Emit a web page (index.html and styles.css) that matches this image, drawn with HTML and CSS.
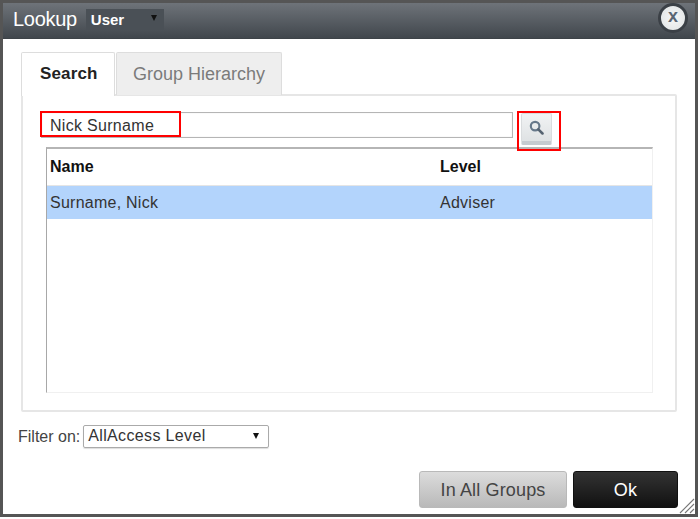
FILE: index.html
```html
<!DOCTYPE html>
<html lang="en">
<head>
<meta charset="utf-8">
<title>Lookup</title>
<link rel="stylesheet" href="styles.css">
</head>
<body>
<div class="dialog">
  <header class="titlebar">
    <span class="title">Lookup</span>
    <span class="type-select">User<span class="arrow small"></span></span>
    <span class="close">x</span>
  </header>
  <main class="content">
    <nav class="tabs">
      <span class="tab active">Search</span>
      <span class="tab">Group Hierarchy</span>
    </nav>
    <section class="panel">
      <div class="search-row">
        <div class="search-input">Nick Surname</div>
        <button class="search-btn" aria-label="Search">
          <svg width="15" height="15" viewBox="0 0 14 14"><circle cx="5.7" cy="5.7" r="4" fill="none" stroke="#66788a" stroke-width="2"/><path d="M8.7 8.7L12.6 12.6" stroke="#566371" stroke-width="2.4" stroke-linecap="round"/></svg>
        </button>
      </div>
      <div class="grid">
        <div class="row head"><span class="col-name">Name</span><span>Level</span></div>
        <div class="row selected"><span class="col-name">Surname, Nick</span><span>Adviser</span></div>
      </div>
    </section>
    <div class="filter">
      <label class="filter-label">Filter on:</label>
      <div class="filter-select">AllAccess Level<span class="arrow"></span></div>
    </div>
    <footer class="actions">
      <button class="btn btn-grey">In All Groups</button>
      <button class="btn btn-dark">Ok</button>
    </footer>
  </main>
  <svg class="grip" width="16" height="16" viewBox="0 0 16 16"><path d="M1 15L15 1M6 15L15 6M11 15L15 11" stroke="#777" stroke-width="1.1" fill="none"/></svg>
  <div class="mark mark-input"></div>
  <div class="mark mark-btn"></div>
</div>
</body>
</html>
```
FILE: styles.css
```css
* { box-sizing: border-box; }
html, body { margin: 0; padding: 0; background: #fff; }
body { width: 700px; height: 519px; overflow: hidden; font-family: "Liberation Sans", Arial, sans-serif; }
.dialog { position: relative; width: 698px; height: 517px; border: 3px solid #555; background: #fff; display: flex; flex-direction: column; }
.titlebar { height: 36px; flex: none; display: flex; align-items: center; padding-left: 10px; background: linear-gradient(#6e7379, #41474d); border-bottom: 1px solid #3d4348; color: #fff; }
.title { font-size: 20px; letter-spacing: -0.3px; margin-right: 9px; margin-top: -2px; }
.type-select { width: 78px; height: 21px; background: #4a5056; font-size: 15px; font-weight: bold; padding: 2px 0 0 5px; position: relative; margin-top: -2px; }
.close { position: absolute; right: 7px; top: 0; width: 30px; height: 30px; border-radius: 50%; background: radial-gradient(#f6f7f7, #dfe2e3); border: 3px solid #3b4046; color: #5a6673; font-size: 18px; font-weight: bold; display: flex; align-items: center; justify-content: center; padding-bottom: 3px; }
.arrow { position: absolute; right: 9px; top: 7px; border-left: 3px solid transparent; border-right: 3px solid transparent; border-top: 6px solid #111; }
.arrow.small { right: 7px; top: 6px; }
.content { flex: 1; display: flex; flex-direction: column; padding: 13px 17px 6px 18px; }
.tabs { display: flex; height: 43px; flex: none; position: relative; z-index: 1; margin-bottom: -1px; }
.tab { height: 43px; padding: 11px 0 0 16px; font-size: 18px; color: #7b7b7b; background: #eee; border: 1px solid #ddd; border-bottom: 0; border-radius: 2px 2px 0 0; white-space: nowrap; width: 166px; margin-left: 1px; }
.tab.active { width: 94px; margin-left: 0; padding: 11px 0 0 18px; background: #fff; color: #222; font-weight: bold; font-size: 17px; letter-spacing: 0.15px; height: 44px; }
.panel { width: 656px; height: 318px; flex: none; border: 2px solid #e6e6e6; border-radius: 2px; padding: 16px 0 0 18px; }
.search-row { display: flex; align-items: flex-start; height: 35px; }
.search-input { width: 472px; height: 26px; border: 1px solid #b5b5b5; font-size: 16px; letter-spacing: 0.3px; color: #333; padding: 4px 0 0 8px; box-shadow: inset 0 0 1px #ccc; }
.search-btn { width: 31px; height: 32px; margin: 1px 0 0 8px; padding: 0; border: 1px solid #d9dcde; border-bottom: 4px solid #c5cbd0; border-radius: 2px; background: linear-gradient(#f1f3f4, #dfe2e4); display: flex; align-items: center; justify-content: center; }
.grid { width: 607px; height: 246px; margin-left: 5px; border-top: 2px solid #b5b5b5; border-left: 1px solid #a8a8a8; border-right: 1px solid #f0f0f0; border-bottom: 1px solid #f0f0f0; }
.row { display: flex; align-items: center; font-size: 16px; letter-spacing: 0.25px; color: #333; padding-left: 3px; }
.col-name { width: 390px; }
.head { height: 37px; font-weight: bold; letter-spacing: 0; color: #111; border-bottom: 1px solid #e5e5e5; }
.selected { height: 33px; background: #b3d4fc; }
.filter { display: flex; align-items: center; height: 23px; margin-top: 13px; margin-left: -3px; }
.filter-label { font-size: 16px; color: #444; margin-right: 3px; }
.filter-select { position: relative; width: 186px; height: 23px; border: 1px solid #aaa; border-radius: 2px; font-size: 16px; letter-spacing: 0.35px; color: #333; padding: 1px 0 0 4px; box-shadow: 0 1px 1px #ddd; }
.actions { display: flex; justify-content: flex-end; gap: 6px; margin-top: auto; }
.btn { height: 37px; border-radius: 3px; font-family: inherit; font-size: 18px; letter-spacing: 0.15px; padding: 2px 0 0; }
.btn-grey { width: 148px; border: 1px solid #b9b9b9; background: linear-gradient(#dcdcdc, #b9b9b9); color: #444; }
.btn-dark { width: 105px; border: 1px solid #111; background: linear-gradient(#333, #111); color: #fff; }
.grip { position: absolute; right: 0; bottom: 0; }
.mark { position: absolute; border: 2px solid #f00; }
.mark-input { left: 37px; top: 108px; width: 141px; height: 26px; }
.mark-btn { left: 514px; top: 108px; width: 44px; height: 40px; }
```
